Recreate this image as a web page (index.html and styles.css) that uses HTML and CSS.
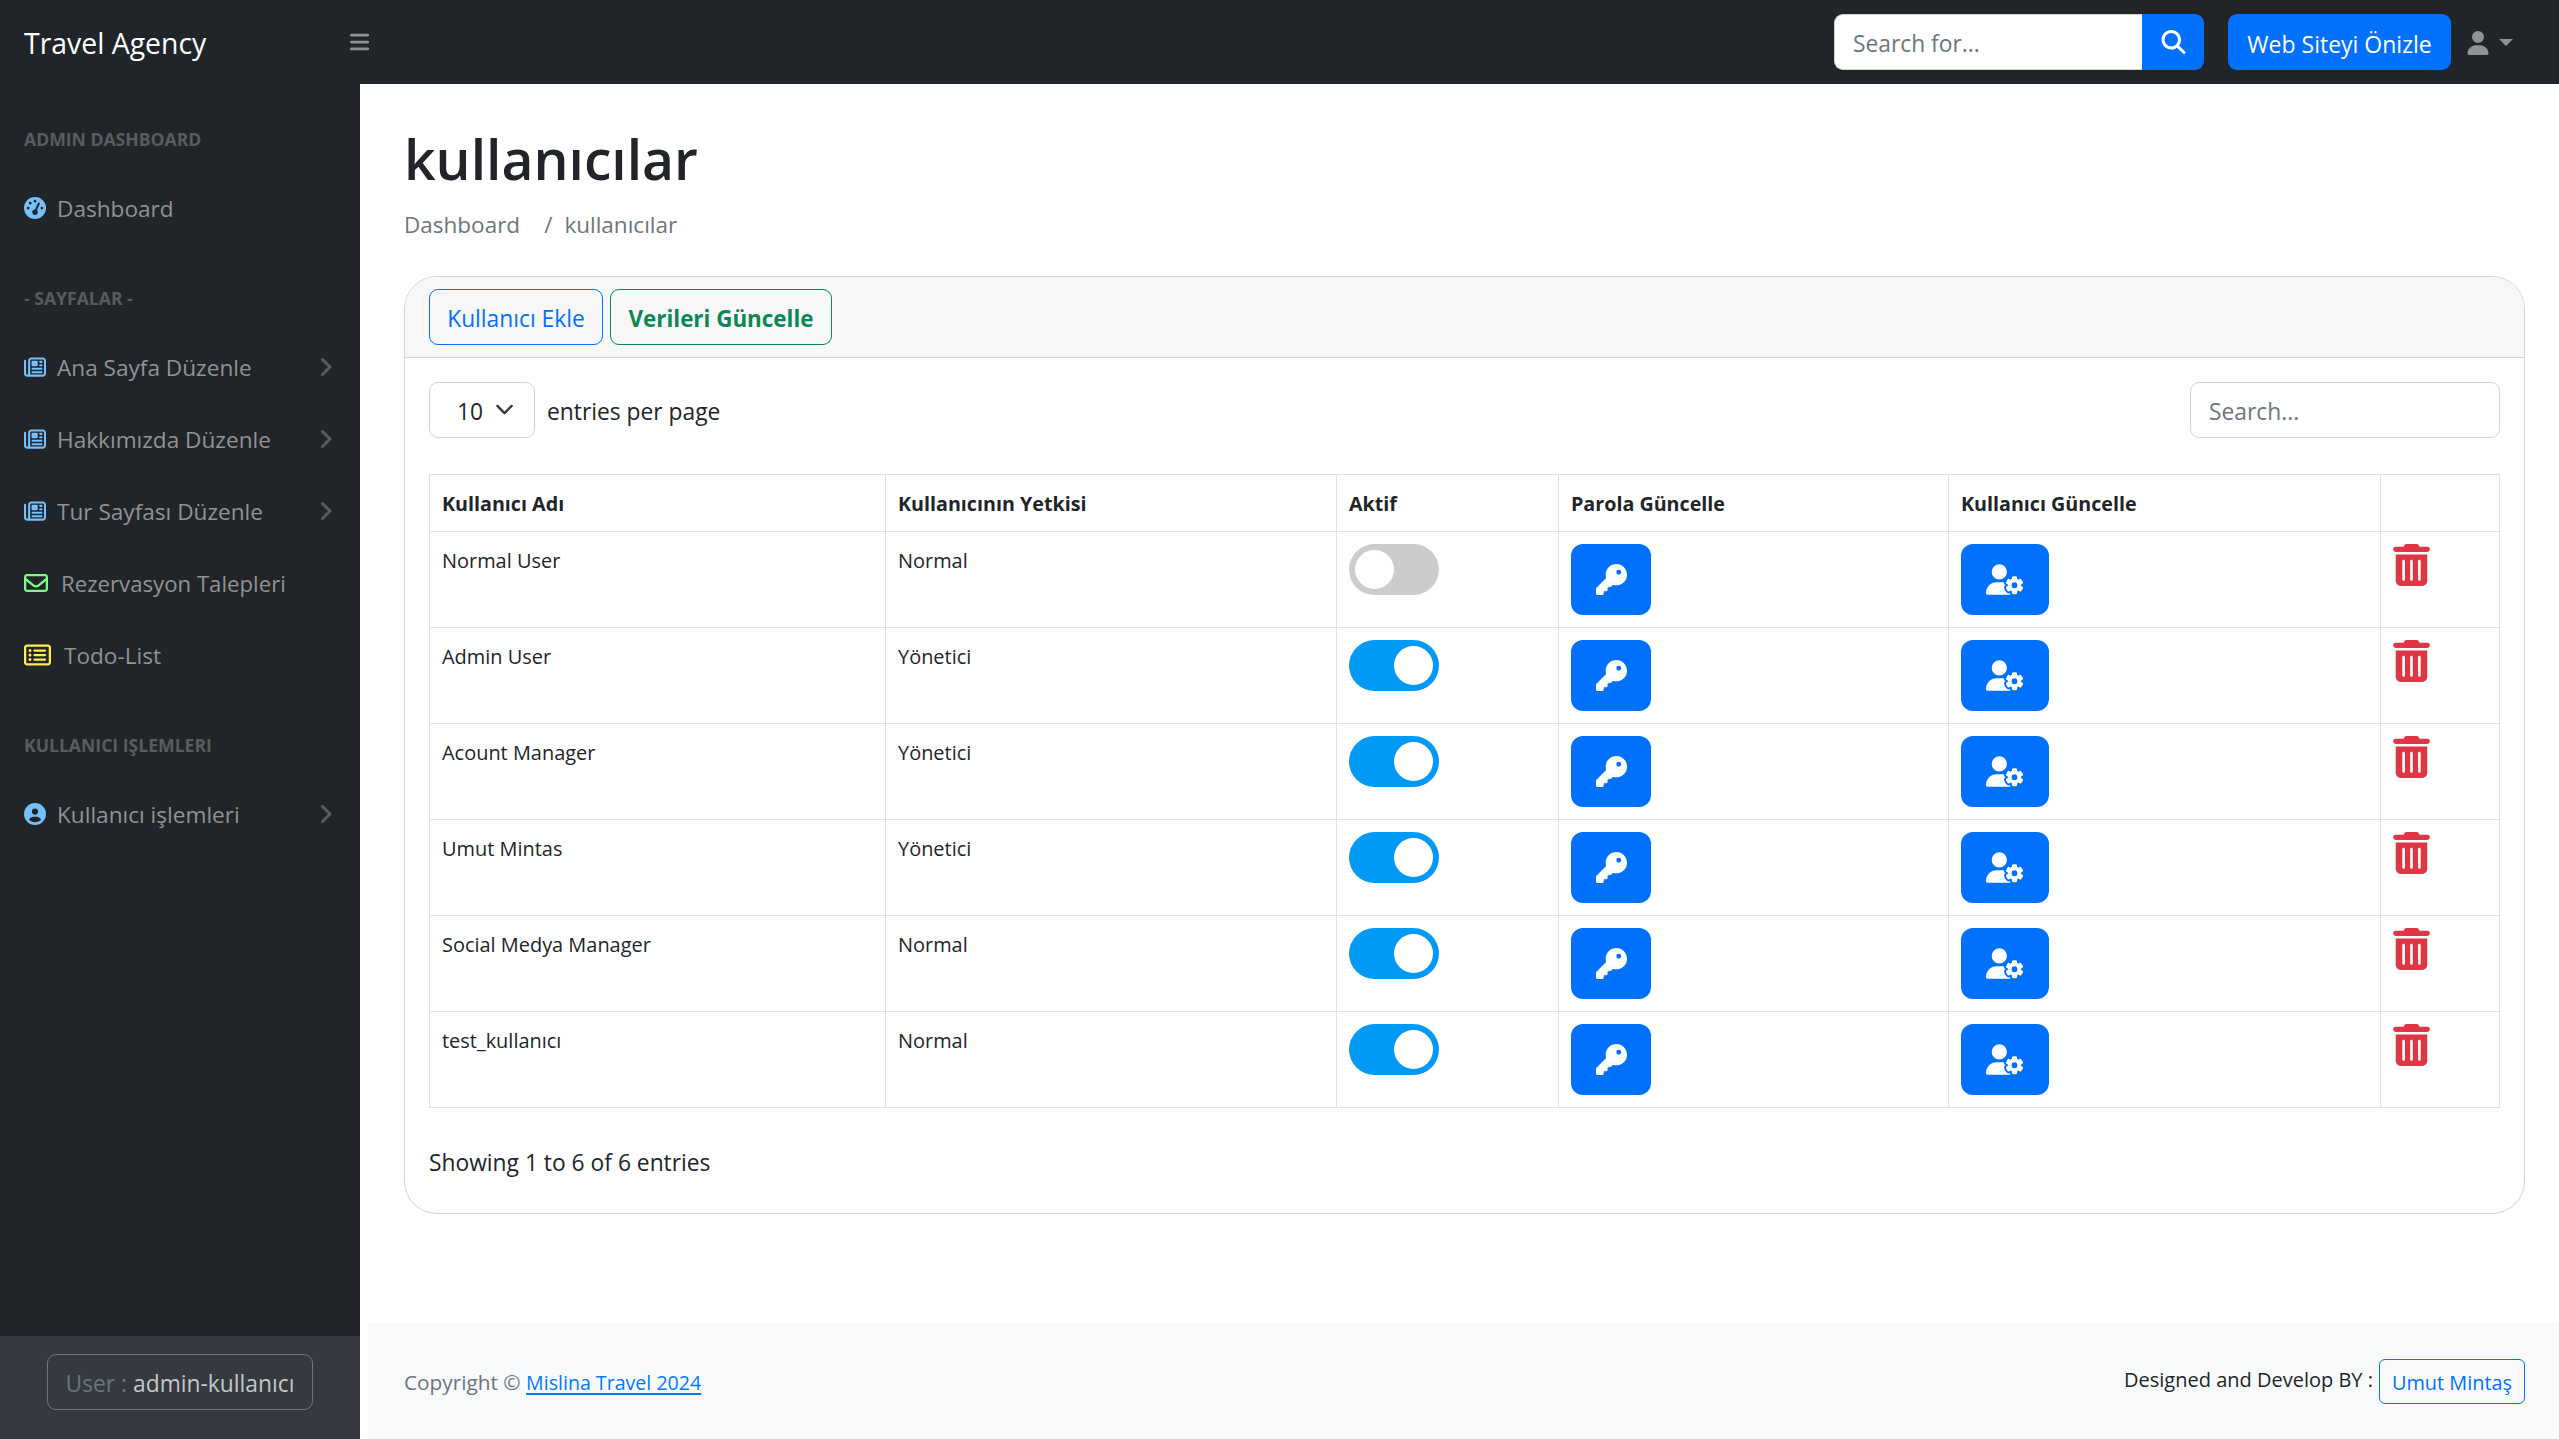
FILE: index.html
```html
<!DOCTYPE html>
<html lang="tr">
<head>
<meta charset="utf-8">
<title>kullanıcılar - Travel Agency</title>
<link rel="stylesheet" href="styles.css">
</head>
<body>
<svg class="sprite" aria-hidden="true">
  <symbol id="bars" viewBox="0 0 448 512"><path d="M0 96C0 78.3 14.3 64 32 64H416c17.7 0 32 14.3 32 32s-14.3 32-32 32H32C14.3 128 0 113.7 0 96zM0 256c0-17.7 14.3-32 32-32H416c17.7 0 32 14.3 32 32s-14.3 32-32 32H32c-17.7 0-32-14.3-32-32zM448 416c0 17.7-14.3 32-32 32H32c-17.7 0-32-14.3-32-32s14.3-32 32-32H416c17.7 0 32 14.3 32 32z"/></symbol>
  <symbol id="search" viewBox="0 0 512 512"><path d="M416 208c0 45.9-14.9 88.3-40 122.7L502.6 457.4c12.5 12.5 12.5 32.8 0 45.3s-32.8 12.5-45.3 0L330.7 376c-34.4 25.2-76.8 40-122.7 40C93.1 416 0 322.9 0 208S93.1 0 208 0S416 93.1 416 208zM208 352a144 144 0 1 0 0-288 144 144 0 1 0 0 288z"/></symbol>
  <symbol id="user" viewBox="0 0 448 512"><path d="M224 256A128 128 0 1 0 224 0a128 128 0 1 0 0 256zm-45.7 48C79.8 304 0 383.8 0 482.3C0 498.7 13.3 512 29.7 512H418.3c16.4 0 29.7-13.3 29.7-29.7C448 383.8 368.2 304 269.7 304H178.3z"/></symbol>
  <symbol id="key" viewBox="0 0 512 512"><path d="M336 352c97.2 0 176-78.8 176-176S433.2 0 336 0S160 78.8 160 176c0 18.7 2.9 36.8 8.3 53.7L7 391c-4.5 4.5-7 10.6-7 17v80c0 13.3 10.7 24 24 24h80c13.3 0 24-10.7 24-24V448h40c13.3 0 24-10.7 24-24V384h40c6.4 0 12.5-2.5 17-7l33.3-33.3c16.9 5.4 35 8.3 53.7 8.3zM376 96a40 40 0 1 1 0 80 40 40 0 1 1 0-80z"/></symbol>
  <symbol id="gauge" viewBox="0 0 512 512"><path d="M0 256a256 256 0 1 1 512 0A256 256 0 1 1 0 256zM288 96a32 32 0 1 0 -64 0 32 32 0 1 0 64 0zM256 416c35.3 0 64-28.7 64-64c0-17.4-6.9-33.1-18.1-44.6L366 161.7c5.3-12.1-.2-26.3-12.3-31.6s-26.3 .2-31.6 12.3L257.9 288c-.6 0-1.3 0-1.9 0c-35.3 0-64 28.7-64 64s28.7 64 64 64zM176 144a32 32 0 1 0 -64 0 32 32 0 1 0 64 0zM96 288a32 32 0 1 0 0-64 32 32 0 1 0 0 64zm352-32a32 32 0 1 0 -64 0 32 32 0 1 0 64 0z"/></symbol>
  <symbol id="news" viewBox="0 0 512 512"><path d="M168 80c-13.3 0-24 10.7-24 24V408c0 8.4-1.4 16.5-4.1 24H440c13.3 0 24-10.7 24-24V104c0-13.3-10.7-24-24-24H168zM72 480c-39.8 0-72-32.2-72-72V112C0 98.7 10.7 88 24 88s24 10.7 24 24V408c0 13.3 10.7 24 24 24s24-10.7 24-24V104c0-39.8 32.2-72 72-72H440c39.8 0 72 32.2 72 72V408c0 39.8-32.2 72-72 72H72zM176 136c0-13.3 10.7-24 24-24h96c13.3 0 24 10.7 24 24v80c0 13.3-10.7 24-24 24H200c-13.3 0-24-10.7-24-24V136zm200-24h32c13.3 0 24 10.7 24 24s-10.7 24-24 24H376c-13.3 0-24-10.7-24-24s10.7-24 24-24zm0 80h32c13.3 0 24 10.7 24 24s-10.7 24-24 24H376c-13.3 0-24-10.7-24-24s10.7-24 24-24zM200 272H408c13.3 0 24 10.7 24 24s-10.7 24-24 24H200c-13.3 0-24-10.7-24-24s10.7-24 24-24zm0 80H408c13.3 0 24 10.7 24 24s-10.7 24-24 24H200c-13.3 0-24-10.7-24-24s10.7-24 24-24z"/></symbol>
  <symbol id="circle-user" viewBox="0 0 512 512"><path d="M399 384.2C376.9 345.8 335.4 320 288 320H224c-47.4 0-88.9 25.8-111 64.2c35.2 39.2 86.2 63.8 143 63.8s107.8-24.7 143-63.8zM0 256a256 256 0 1 1 512 0A256 256 0 1 1 0 256zm256 16a72 72 0 1 0 0-144 72 72 0 1 0 0 144z"/></symbol>
  <symbol id="envelope" viewBox="0 0 512 512"><path d="M64 112c-8.800 0-16 7.200-16 16v22.100L220.500 291.700c20.700 17 50.400 17 71.100 0L464 150.100V128c0-8.800-7.200-16-16-16H64zM48 212.200V384c0 8.800 7.200 16 16 16H448c8.800 0 16-7.200 16-16V212.200L322 328.800c-38.400 31.500-93.700 31.500-132 0L48 212.200zM0 128C0 92.700 28.700 64 64 64H448c35.300 0 64 28.700 64 64V384c0 35.300-28.700 64-64 64H64c-35.300 0-64-28.700-64-64V128z"/></symbol>
  <symbol id="list" viewBox="0 0 576 512"><path d="M64 80c-8.800 0-16 7.200-16 16V416c0 8.800 7.200 16 16 16H512c8.800 0 16-7.200 16-16V96c0-8.800-7.200-16-16-16H64zM0 96C0 60.700 28.700 32 64 32H512c35.300 0 64 28.700 64 64V416c0 35.300-28.700 64-64 64H64c-35.300 0-64-28.700-64-64V96zM96 160a32 32 0 1 1 64 0 32 32 0 1 1 -64 0zM96 256a32 32 0 1 1 64 0 32 32 0 1 1 -64 0zM96 352a32 32 0 1 1 64 0 32 32 0 1 1 -64 0zM200 160c0-13.300 10.700-24 24-24H448c13.300 0 24 10.700 24 24s-10.700 24-24 24H224c-13.300 0-24-10.700-24-24zM200 256c0-13.300 10.700-24 24-24H448c13.300 0 24 10.700 24 24s-10.700 24-24 24H224c-13.300 0-24-10.700-24-24zM200 352c0-13.300 10.700-24 24-24H448c13.300 0 24 10.700 24 24s-10.700 24-24 24H224c-13.300 0-24-10.700-24-24z"/></symbol>
  <symbol id="user-gear" viewBox="0 0 640 512"><path d="M224 0a128 128 0 1 1 0 256A128 128 0 1 1 224 0zM178.3 304h91.4c11.8 0 23.4 1.2 34.5 3.3c-2.1 18.5 7.4 35.6 21.8 44.8c-16.6 10.6-26.7 31.6-20 53.3c4 12.9 9.400 25.500 16.400 37.600s15.200 23.100 24.400 33c15.700 16.900 39.600 18.400 57.200 8.700v.9c0 9.200 2.700 18.500 7.900 26.300H29.700C13.300 512 0 498.700 0 482.300C0 383.800 79.800 304 178.300 304zM436 218.200c0-7 4.500-13.300 11.300-14.800c10.500-2.400 21.500-3.700 32.700-3.700s22.200 1.300 32.700 3.700c6.800 1.500 11.300 7.800 11.300 14.800v30.600c7.900 3.400 15.400 7.700 22.300 12.800l24.900-14.300c6.100-3.500 13.700-2.700 18.500 2.400c7.600 8.100 14.300 17.200 20.100 27.200s10.300 20.400 13.500 31c2.100 6.700-1.100 13.700-7.200 17.200l-25 14.400c.4 4 .7 8.100 .7 12.300s-.2 8.200-.7 12.300l25 14.400c6.100 3.500 9.200 10.500 7.200 17.200c-3.300 10.600-7.800 21-13.500 31s-12.500 19.100-20.100 27.200c-4.800 5.100-12.500 5.900-18.500 2.400l-24.900-14.300c-6.900 5.100-14.300 9.400-22.300 12.800l0 30.600c0 7-4.500 13.300-11.300 14.800c-10.500 2.400-21.500 3.700-32.700 3.700s-22.200-1.300-32.700-3.700c-6.800-1.500-11.300-7.800-11.300-14.800V454.800c-8-3.400-15.600-7.700-22.500-12.900l-24.700 14.300c-6.100 3.500-13.700 2.700-18.500-2.400c-7.600-8.100-14.300-17.200-20.100-27.200s-10.300-20.400-13.500-31c-2.100-6.700 1.100-13.700 7.200-17.200l24.800-14.300c-.4-4.100-.7-8.200-.7-12.400s.2-8.300 .7-12.400L343.800 325c-6.100-3.500-9.200-10.500-7.200-17.200c3.300-10.600 7.700-21 13.500-31s12.500-19.100 20.100-27.200c4.800-5.100 12.400-5.900 18.500-2.400l24.800 14.300c6.900-5.100 14.500-9.400 22.500-12.900V218.200zm92.100 133.500a48.100 48.100 0 1 0 -96.100 0 48.100 48.100 0 1 0 96.100 0z"/></symbol>
  <symbol id="trash" viewBox="0 0 448 512"><path d="M135.200 17.700C140.600 6.800 151.700 0 163.800 0H284.200c12.100 0 23.200 6.800 28.600 17.700L320 32h96c17.700 0 32 14.300 32 32s-14.300 32-32 32H32C14.300 96 0 81.700 0 64S14.300 32 32 32h96l7.200-14.300zM32 128H416V448c0 35.300-28.700 64-64 64H96c-35.300 0-64-28.700-64-64V128zm96 64c-8.800 0-16 7.200-16 16V432c0 8.800 7.200 16 16 16s16-7.200 16-16V208c0-8.800-7.200-16-16-16zm96 0c-8.800 0-16 7.200-16 16V432c0 8.800 7.200 16 16 16s16-7.200 16-16V208c0-8.800-7.200-16-16-16zm96 0c-8.800 0-16 7.200-16 16V432c0 8.800 7.200 16 16 16s16-7.200 16-16V208c0-8.800-7.200-16-16-16z"/></symbol>
  <symbol id="angle" viewBox="0 0 320 512"><path d="M278.600 233.400c12.500 12.500 12.500 32.800 0 45.300l-160 160c-12.500 12.500-32.800 12.500-45.300 0s-12.500-32.800 0-45.300L210.700 256 73.400 118.600c-12.500-12.500-12.500-32.800 0-45.300s32.800-12.500 45.300 0l160 160z"/></symbol>
</svg>

<header class="topnav">
  <a class="brand">Travel Agency</a>
  <svg class="toggle-nav"><use href="#bars"/></svg>
  <div class="nav-search">
    <input type="text" placeholder="Search for...">
    <button><svg><use href="#search"/></svg></button>
  </div>
  <a class="btn btn-preview">Web Siteyi Önizle</a>
  <div class="user-menu"><svg><use href="#user"/></svg><i class="caret"></i></div>
</header>

<div class="layout">
  <nav class="sidebar">
    <div class="heading">ADMIN DASHBOARD</div>
    <a class="item"><svg class="ic blue"><use href="#gauge"/></svg><span>Dashboard</span></a>
    <div class="heading">- SAYFALAR -</div>
    <a class="item"><svg class="ic blue"><use href="#news"/></svg><span>Ana Sayfa Düzenle</span><svg class="arrow"><use href="#angle"/></svg></a>
    <a class="item"><svg class="ic blue"><use href="#news"/></svg><span>Hakkımızda Düzenle</span><svg class="arrow"><use href="#angle"/></svg></a>
    <a class="item"><svg class="ic blue"><use href="#news"/></svg><span>Tur Sayfası Düzenle</span><svg class="arrow"><use href="#angle"/></svg></a>
    <a class="item mail"><svg class="ic green"><use href="#envelope"/></svg><span>Rezervasyon Talepleri</span></a>
    <a class="item todo"><svg class="ic yellow"><use href="#list"/></svg><span>Todo-List</span></a>
    <div class="heading">KULLANICI IŞLEMLERI</div>
    <a class="item"><svg class="ic blue"><use href="#circle-user"/></svg><span>Kullanıcı işlemleri</span><svg class="arrow"><use href="#angle"/></svg></a>
    <div class="side-foot"><div class="who"><span>User :</span> admin-kullanıcı</div></div>
  </nav>

  <div class="content">
    <main>
      <h1>kullanıcılar</h1>
      <div class="crumbs"><span>Dashboard</span><span class="sep">/</span><span>kullanıcılar</span></div>
      <section class="card">
        <div class="card-head">
          <a class="btn btn-add">Kullanıcı Ekle</a>
          <a class="btn btn-update">Verileri Güncelle</a>
        </div>
        <div class="card-body">
          <div class="tools">
            <div class="select">10<svg viewBox="0 0 16 16"><path d="m2 5 6 6 6-6"/></svg></div>
            <span class="per">entries per page</span>
            <input class="filter" type="text" placeholder="Search...">
          </div>
          <table>
            <colgroup><col class="c1"><col class="c2"><col class="c3"><col class="c4"><col class="c5"><col class="c6"></colgroup>
            <thead>
              <tr><th>Kullanıcı Adı</th><th>Kullanıcının Yetkisi</th><th>Aktif</th><th>Parola Güncelle</th><th>Kullanıcı Güncelle</th><th></th></tr>
            </thead>
            <tbody>
              <tr><td>Normal User</td><td>Normal</td><td class="w"><i class="switch"></i></td><td class="w"><a class="act key"><svg><use href="#key"/></svg></a></td><td class="w"><a class="act gear"><svg><use href="#user-gear"/></svg></a></td><td class="w"><svg class="trash"><use href="#trash"/></svg></td></tr>
              <tr><td>Admin User</td><td>Yönetici</td><td class="w"><i class="switch on"></i></td><td class="w"><a class="act key"><svg><use href="#key"/></svg></a></td><td class="w"><a class="act gear"><svg><use href="#user-gear"/></svg></a></td><td class="w"><svg class="trash"><use href="#trash"/></svg></td></tr>
              <tr><td>Acount Manager</td><td>Yönetici</td><td class="w"><i class="switch on"></i></td><td class="w"><a class="act key"><svg><use href="#key"/></svg></a></td><td class="w"><a class="act gear"><svg><use href="#user-gear"/></svg></a></td><td class="w"><svg class="trash"><use href="#trash"/></svg></td></tr>
              <tr><td>Umut Mintas</td><td>Yönetici</td><td class="w"><i class="switch on"></i></td><td class="w"><a class="act key"><svg><use href="#key"/></svg></a></td><td class="w"><a class="act gear"><svg><use href="#user-gear"/></svg></a></td><td class="w"><svg class="trash"><use href="#trash"/></svg></td></tr>
              <tr><td>Social Medya Manager</td><td>Normal</td><td class="w"><i class="switch on"></i></td><td class="w"><a class="act key"><svg><use href="#key"/></svg></a></td><td class="w"><a class="act gear"><svg><use href="#user-gear"/></svg></a></td><td class="w"><svg class="trash"><use href="#trash"/></svg></td></tr>
              <tr><td>test_kullanıcı</td><td>Normal</td><td class="w"><i class="switch on"></i></td><td class="w"><a class="act key"><svg><use href="#key"/></svg></a></td><td class="w"><a class="act gear"><svg><use href="#user-gear"/></svg></a></td><td class="w"><svg class="trash"><use href="#trash"/></svg></td></tr>
            </tbody>
          </table>
          <div class="info">Showing 1 to 6 of 6 entries</div>
        </div>
      </section>
    </main>
    <footer>
      <div class="copy">Copyright © <a>Mislina Travel 2024</a></div>
      <div class="credit"><span>Designed and Develop BY :</span><a>Umut Mintaş</a></div>
    </footer>
  </div>
</div>
</body>
</html>
```
FILE: styles.css
```css
* { box-sizing: border-box; }
body {
  margin: 0;
  height: 1439px;
  display: flex;
  flex-direction: column;
  font: 22.8px/36px "Open Sans", "Noto Sans", sans-serif;
  color: #212529;
  background: #fff;
  overflow: hidden;
}
svg { display: block; fill: currentColor; flex: none; }
.sprite { position: absolute; width: 0; height: 0; }
input { font: inherit; outline: none; color: #212529; background: #fff; }
input::placeholder { color: #6c757d; opacity: 1; }

/* Top bar */
.topnav {
  height: 84px;
  flex: none;
  display: flex;
  align-items: center;
  background: #212529;
  padding-right: 46px;
}
.brand { width: 350px; padding: 2px 0 0 24px; flex: none; color: #fff; font-size: 28.4px; }
.toggle-nav { width: 19.4px; height: 22px; color: #909294; }
.nav-search { display: flex; margin-left: auto; width: 370px; height: 56px; }
.nav-search input {
  width: 308px;
  border: 1px solid #ced4da;
  border-right: 0;
  border-radius: 9px 0 0 9px;
  padding: 3px 18px 0;
}
.nav-search button {
  flex: 1;
  border: 0;
  border-radius: 0 9px 9px 0;
  background: #0070ff;
  color: #fff;
  display: flex;
  align-items: center;
  justify-content: center;
  padding: 0 0 0 1px;
}
.nav-search button svg { width: 25px; height: 24px; }
.btn {
  height: 56px;
  border-radius: 9px;
  display: flex;
  align-items: center;
  justify-content: center;
  padding-top: 3px;
  white-space: nowrap;
}
.btn-preview { width: 223px; margin-left: 24px; background: #0070ff; color: #fff; font-size: 23px; }
.user-menu { display: flex; align-items: center; margin-left: 16px; color: #909294; }
.user-menu svg { width: 22px; height: 24px; margin-top: 2px; }
.caret { margin-left: 10px; border: 7px solid transparent; border-top-color: #909294; border-bottom: 0; }

/* Side navigation */
.layout { flex: 1; display: flex; min-height: 0; }
.sidebar { width: 360px; flex: none; background: #212529; display: flex; flex-direction: column; }
.heading {
  height: 88px;
  padding: 43px 24px 21px;
  line-height: 24px;
  font-size: 17.6px;
  font-weight: 700;
  color: #595c5f;
}
.heading:not(:first-child) { height: 87px; padding-top: 42px; }
.item { height: 72px; display: flex; align-items: center; gap: 11px; padding: 0 27px 0 24px; color: #909294; white-space: nowrap; font-size: 22.6px; }
.item span { padding-top: 2px; }
.mail { gap: 13px; font-size: 22.2px; }
.todo { gap: 13px; }
.ic { width: 22px; height: 22px; }
.blue { color: #74c0fc; }
.green { width: 24px; height: 24px; color: #7dff83; }
.yellow { width: 27px; height: 24px; color: #ffee52; }
.arrow { width: 15px; height: 24px; margin-left: auto; color: #595c5f; }
.side-foot { margin-top: auto; height: 103px; background: #363940; padding: 18px 0 0 47px; }
.who {
  width: 266px;
  height: 56px;
  border: 1px solid #6c757d;
  border-radius: 9px;
  background: #343a40;
  display: flex;
  align-items: center;
  justify-content: center;
  gap: 6px;
  padding-top: 3px;
  color: #c5c6c8;
}
.who span { color: #6c757d; }

/* Page */
.content { flex: 1; min-width: 0; display: flex; flex-direction: column; }
main { flex: 1; padding: 35px 34px 0 44px; }
h1 { margin: 0 0 10px; font-size: 55.2px; font-weight: 600; line-height: 80px; height: 79px; }
.crumbs { display: flex; color: #6c757d; margin-bottom: 36px; padding-top: 1px; line-height: 31px; height: 32px; font-size: 22.5px; }
.crumbs .sep { margin: 0 12px 0 24px; }
.card { border: 1px solid #d3d3d3; border-radius: 33px; height: 938px; overflow: hidden; }
.card-head { height: 81px; border-bottom: 1px solid #d0d0d0; background: #f7f7f7; display: flex; gap: 7px; padding: 12px 24px; }
.btn-add { width: 174px; border: 1px solid #0070ff; color: #0070ff; }
.btn-update { width: 222px; border: 1px solid #0a8754; color: #0a8754; font-weight: 700; font-size: 22.4px; }
.card-body { padding: 24px; }
.tools { display: flex; align-items: center; height: 56px; margin-bottom: 36px; }
.select {
  width: 106px;
  height: 56px;
  border: 1px solid #ced4da;
  border-radius: 9px;
  display: flex;
  align-items: center;
  padding: 3px 0 0 27px;
  gap: 12px;
}
.select svg { width: 19px; height: 19px; fill: none; stroke: #343a40; stroke-width: 2; stroke-linecap: round; stroke-linejoin: round; margin-top: -4px; }
.per { margin-left: 12px; padding-top: 3px; }
.filter { margin-left: auto; width: 310px; height: 56px; border: 1px solid #ced4da; border-radius: 9px; padding: 2px 18px 0; }

table { width: 2071px; table-layout: fixed; border-collapse: collapse; font-size: 19.95px; line-height: 32px; }
.c1 { width: 456px; }
.c2 { width: 451px; }
.c3 { width: 222px; }
.c4 { width: 390px; }
.c5 { width: 432px; }
.c6 { width: 119px; }
th, td { border: 1px solid #dee2e6; text-align: left; vertical-align: top; padding: 13px 12px 0; height: 96px; }
th { height: 57px; font-size: 19.7px; }
.w { padding: 12px 12px 0; }
.switch { display: flex; width: 90px; height: 51px; border-radius: 26px; background: #ccc; padding: 6px; }
.switch::before { content: ""; width: 39px; height: 39px; border-radius: 50%; background: #fff; }
.switch.on { background: #0099f5; justify-content: flex-end; }
.act { display: flex; align-items: center; justify-content: center; height: 71px; border-radius: 12px; background: #0070ff; color: #fff; }
.key { width: 80px; }
.gear { width: 88px; }
.key svg { width: 31px; height: 31px; }
.gear svg { width: 38px; height: 31px; }
.trash { width: 37px; height: 42px; color: #e03545; }
.info { margin-top: 37px; }

footer { height: 116px; margin-left: 8px; padding: 0 34px 0 36px; background: #f8f9fb; display: flex; align-items: center; justify-content: space-between; }
.copy { color: #6c757d; padding-top: 3px; font-size: 20.8px; }
.copy a { font-size: 19.6px; color: #007bff; text-decoration: underline; text-decoration-thickness: 2px; text-underline-offset: 3px; }
.credit { display: flex; align-items: center; gap: 6px; font-size: 20px; }
.credit span { margin-top: -3px; }
.credit a { width: 146px; height: 45px; border: 1px solid #0070ff; border-radius: 6px; color: #0070ff; display: flex; align-items: center; justify-content: center; padding-top: 3px; font-size: 19.9px; }
```
